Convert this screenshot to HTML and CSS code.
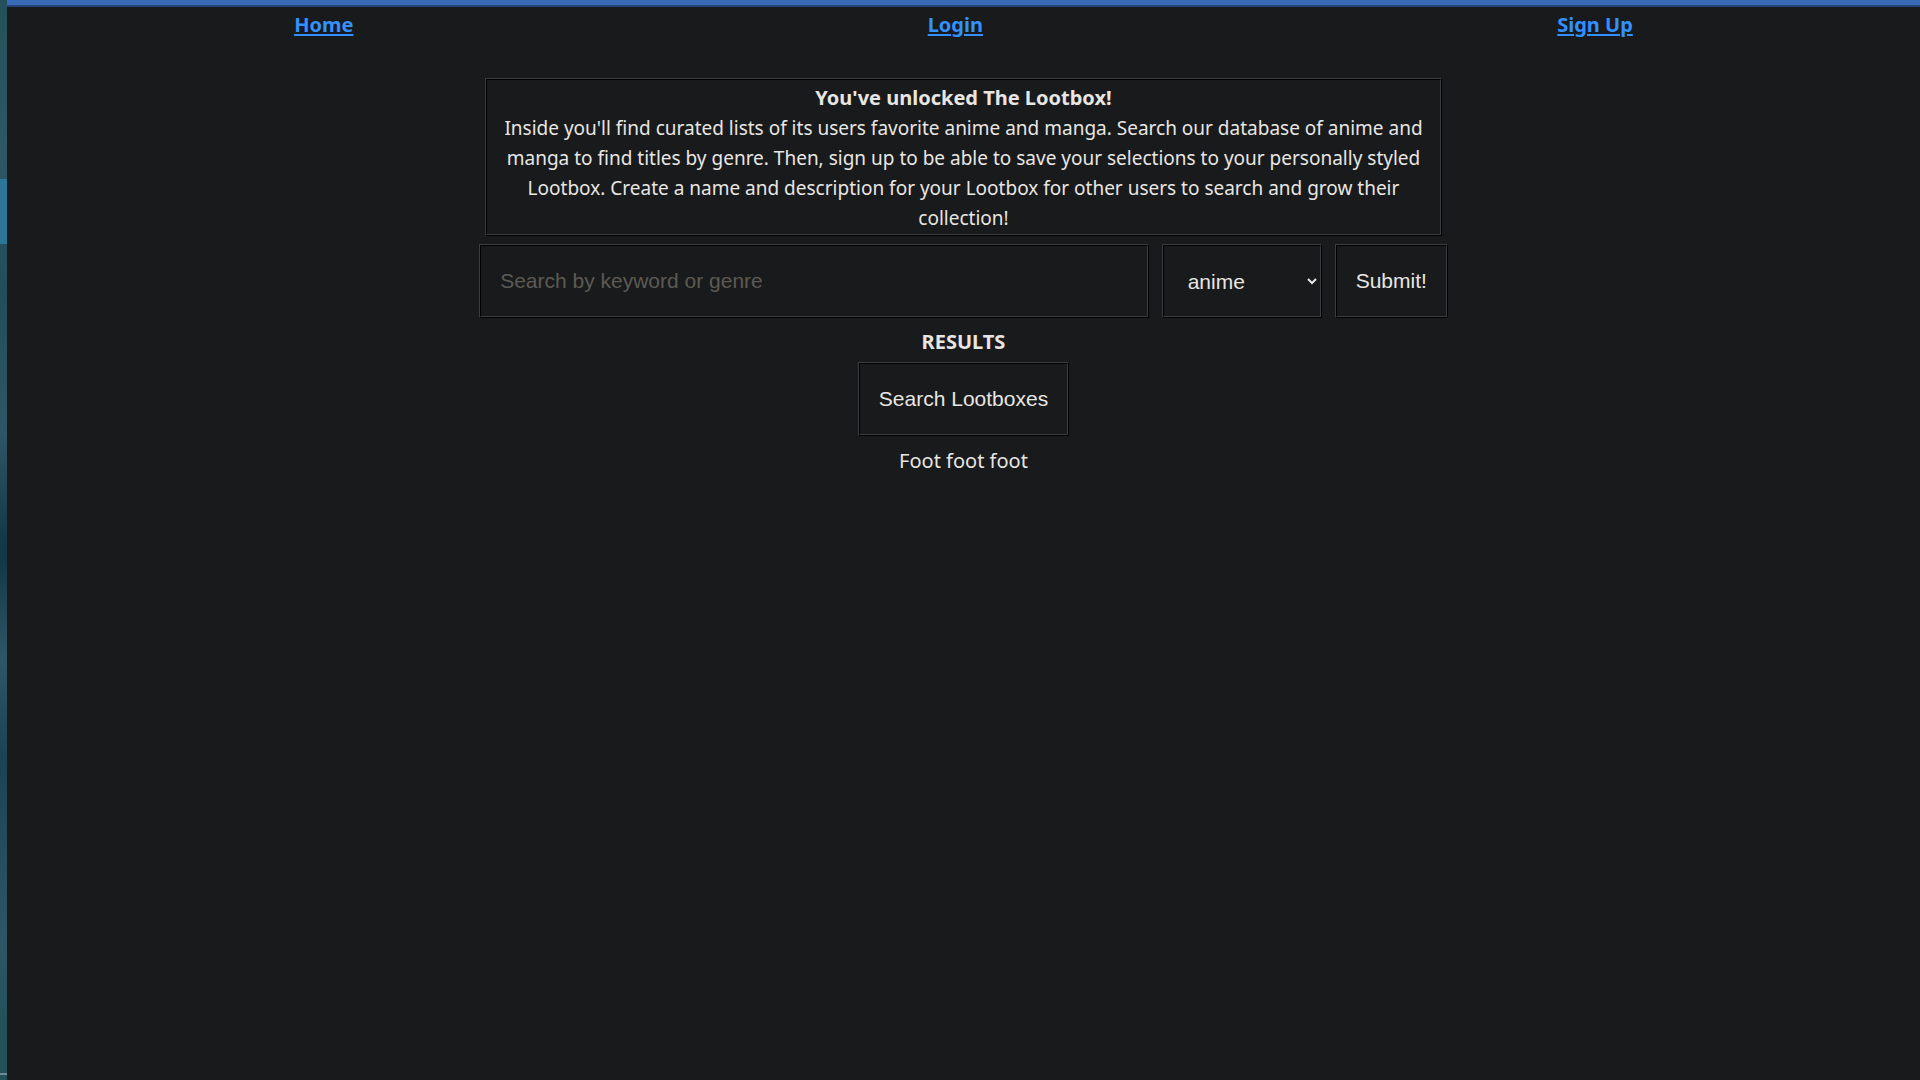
FILE: index.html
```html
<!DOCTYPE html>
<html lang="en">
<head>
<meta charset="utf-8">
<title>The Lootbox</title>
<link rel="stylesheet" href="styles.css">
</head>
<body>
<div class="backdrop" aria-hidden="true"></div>
<div class="page">
  <nav class="nav">
    <a href="#home">Home</a>
    <a href="#login">Login</a>
    <a href="#signup">Sign Up</a>
  </nav>
  <main class="main">
    <section class="intro">
      <h1 class="heading">You've unlocked The Lootbox!</h1>
      <p class="copy">Inside you'll find curated lists of its users favorite anime and manga. Search our database of anime and manga to find titles by genre. Then, sign up to be able to save your selections to your personally styled Lootbox. Create a name and description for your Lootbox for other users to search and grow their collection!</p>
    </section>
    <form class="search">
      <input class="control keyword" type="text" aria-label="Keyword or genre" placeholder="Search by keyword or genre">
      <select class="control kind" aria-label="Type">
        <option>anime</option>
        <option>manga</option>
      </select>
      <button class="control" type="button">Submit!</button>
    </form>
    <h2 class="heading">RESULTS</h2>
    <button class="control lootboxes" type="button">Search Lootboxes</button>
  </main>
  <footer class="footer">Foot foot foot</footer>
</div>
</body>
</html>
```
FILE: styles.css
```css
* {
  box-sizing: border-box;
}

body {
  display: flex;
  min-height: 100vh;
  margin: 0;
  background: #181a1b;
  color: #e8e6e3;
  font: 20px/30px "Noto Sans", "Open Sans", sans-serif;
}

.backdrop {
  flex: none;
  width: 7px;
  background:
    linear-gradient(#2c7799, #2c7799) 0 179px / 100% 65px no-repeat,
    linear-gradient(#6b8d96, #6b8d96) 0 1073px / 100% 2px no-repeat,
    linear-gradient(#24505b 0%, #2f5766 14%, #234d5b 27%, #2f5668 40%, #13384a 50%, #13384a 52%, #2f5668 61%, #1b4255 70%, #2f5668 87%, #23505a 96%, #23505a 100%);
}

.page {
  flex: 1;
  border-top: 5px solid #396bb8;
  box-shadow: inset 0 2px #25447a;
}

.nav {
  display: flex;
  justify-content: space-around;
  padding: 5px 0 38px;
  font-weight: 700;
}

.nav a {
  color: #3391ff;
  text-underline-offset: 2px;
  text-decoration-thickness: 2px;
}

.main {
  display: flex;
  flex-direction: column;
  align-items: center;
}

.intro {
  width: 50%;
  padding: 3px 5px 1px;
  border: 2px ridge #3a3e41;
  text-align: center;
}

.heading {
  margin: 0;
  font-size: 20px;
  font-weight: 700;
  line-height: 30px;
}

.copy {
  margin: 0;
  font-size: 19px;
}

.search {
  display: flex;
  justify-content: center;
  gap: 13px;
  width: 100%;
  margin: 8px 0 9px;
}

.control {
  height: 74px;
  margin: 0;
  padding: 0 19px;
  border: 2px ridge #3a3e41;
  background: #181a1b;
  color: #e8e6e3;
  font: 21px/24px "Liberation Sans", Arial, sans-serif;
}

.keyword {
  width: 35%;
}

.keyword::placeholder {
  color: #5d5a55;
}

.kind {
  width: 160px;
  padding: 0 3px 0 20px;
}

.lootboxes {
  margin: 5px 0 10px;
}

.footer {
  text-align: center;
}
```
